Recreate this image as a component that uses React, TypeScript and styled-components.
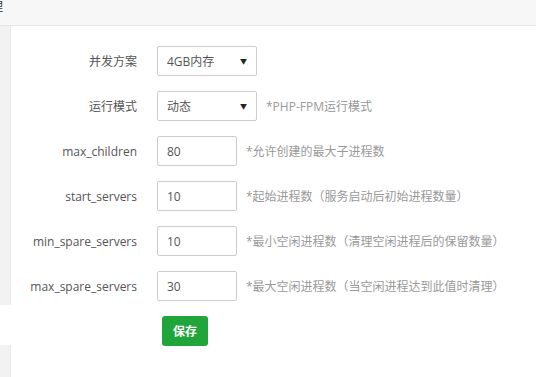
import styled, { createGlobalStyle } from "styled-components";

const GlobalStyle = createGlobalStyle`
    body {
        margin: 0;
        background: #fff;
        font-family: "Open Sans", "Noto Sans CJK SC", sans-serif;
        font-size: 12px;
        color: #555;
    }
`;

const Header = styled.div`
    height: 25px;
    background-color: #f7f7f7;
    border-bottom: 1px solid #e5e5e5;
    overflow: hidden;
`;

const HeaderTitle = styled.div`
    margin-left: -9px;
    line-height: 14px;
    font-size: 12px;
    color: #333;
`;

const Main = styled.div`
    display: flex;
    height: 351px;
`;

const Sidebar = styled.div`
    width: 11px;
    display: flex;
    flex-direction: column;
    gap: 40px;
`;

const SideBlock = styled.div<{ grow?: boolean }>`
    background-color: #f2f2f2;
    border-right: 1px solid #e9e9e9;
    height: ${(props) => (props.grow ? "auto" : "279px")};
    flex: ${(props) => (props.grow ? 1 : "none")};
`;

const Form = styled.div`
    flex: 1;
    padding-top: 20px;
    display: flex;
    flex-direction: column;
    gap: 15px;
`;

const Row = styled.div`
    display: flex;
    align-items: center;
    height: 30px;
`;

const Label = styled.div`
    width: 126px;
    padding-right: 20px;
    text-align: right;
    color: #555;
`;

const Select = styled.div`
    box-sizing: border-box;
    width: 100px;
    height: 30px;
    border: 1px solid #ccc;
    border-radius: 2px;
    padding: 0 9px 0 9px;
    display: flex;
    align-items: center;
    justify-content: space-between;
    color: #555;
`;

const Arrow = styled.span`
    font-size: 7px;
    color: #222;
`;

const Input = styled.div`
    box-sizing: border-box;
    width: 80px;
    height: 30px;
    border: 1px solid #ccc;
    border-radius: 2px;
    padding-left: 9px;
    display: flex;
    align-items: center;
    color: #555;
    font-size: 12px;
`;

const Hint = styled.span`
    margin-left: 9px;
    color: #999;
`;

const SaveButton = styled.button`
    margin-left: 151px;
    width: 46px;
    height: 30px;
    border: none;
    border-radius: 3px;
    background-color: #20a53a;
    color: #fff;
    font-family: "Open Sans", "Noto Sans CJK SC", sans-serif;
    font-size: 12px;
    font-weight: bold;
    padding: 0;
`;

const fields = [
    { name: "max_children", value: "80", hint: "*允许创建的最大子进程数" },
    { name: "start_servers", value: "10", hint: "*起始进程数（服务启动后初始进程数量）" },
    { name: "min_spare_servers", value: "10", hint: "*最小空闲进程数（清理空闲进程后的保留数量）" },
    { name: "max_spare_servers", value: "30", hint: "*最大空闲进程数（当空闲进程达到此值时清理）" },
];

function App() {
    return (
        <>
            <GlobalStyle />
            <Header>
                <HeaderTitle>理</HeaderTitle>
            </Header>
            <Main>
                <Sidebar>
                    <SideBlock />
                    <SideBlock grow />
                </Sidebar>
                <Form>
                    <Row>
                        <Label>并发方案</Label>
                        <Select>
                            4GB内存<Arrow>▼</Arrow>
                        </Select>
                    </Row>
                    <Row>
                        <Label>运行模式</Label>
                        <Select>
                            动态<Arrow>▼</Arrow>
                        </Select>
                        <Hint>*PHP-FPM运行模式</Hint>
                    </Row>
                    {fields.map((f) => (
                        <Row key={f.name}>
                            <Label>{f.name}</Label>
                            <Input>{f.value}</Input>
                            <Hint>{f.hint}</Hint>
                        </Row>
                    ))}
                    <Row>
                        <SaveButton>保存</SaveButton>
                    </Row>
                </Form>
            </Main>
        </>
    );
}

export default App;
